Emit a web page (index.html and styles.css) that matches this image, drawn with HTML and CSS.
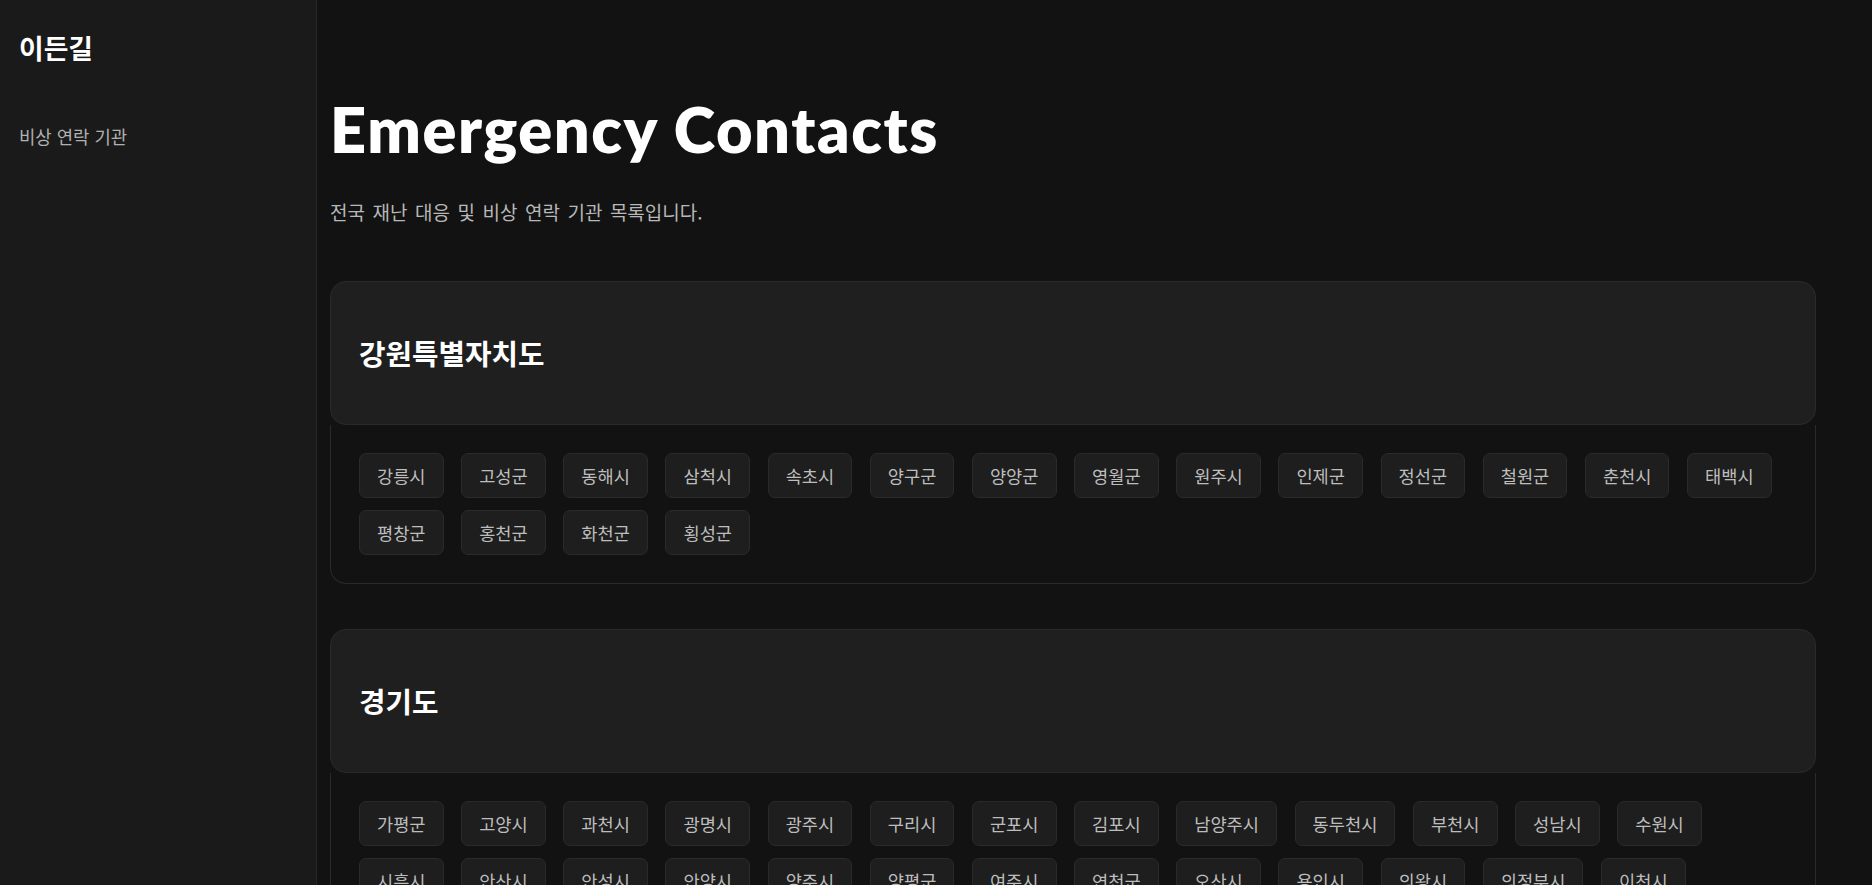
FILE: index.html
```html
<!DOCTYPE html>
<html lang="ko">
<head>
<meta charset="utf-8">
<title>Emergency Contacts</title>
<link rel="stylesheet" href="styles.css">
</head>
<body>
<aside class="sidebar">
  <div class="logo">이든길</div>
  <nav class="nav">
    <a class="nav-item" href="#">비상 연락 기관</a>
  </nav>
</aside>
<main class="main">
  <h1 class="title">Emergency Contacts</h1>
  <p class="subtitle">전국 재난 대응 및 비상 연락 기관 목록입니다.</p>

  <section class="region">
    <div class="region-head"><h2 class="region-name">강원특별자치도</h2></div>
    <div class="region-body">
      <span class="chip">강릉시</span><span class="chip">고성군</span><span class="chip">동해시</span><span class="chip">삼척시</span><span class="chip">속초시</span><span class="chip">양구군</span><span class="chip">양양군</span><span class="chip">영월군</span><span class="chip">원주시</span><span class="chip">인제군</span><span class="chip">정선군</span><span class="chip">철원군</span><span class="chip">춘천시</span><span class="chip">태백시</span><span class="chip">평창군</span><span class="chip">홍천군</span><span class="chip">화천군</span><span class="chip">횡성군</span>
    </div>
  </section>

  <section class="region">
    <div class="region-head"><h2 class="region-name">경기도</h2></div>
    <div class="region-body">
      <span class="chip">가평군</span><span class="chip">고양시</span><span class="chip">과천시</span><span class="chip">광명시</span><span class="chip">광주시</span><span class="chip">구리시</span><span class="chip">군포시</span><span class="chip">김포시</span><span class="chip">남양주시</span><span class="chip">동두천시</span><span class="chip">부천시</span><span class="chip">성남시</span><span class="chip">수원시</span><span class="chip">시흥시</span><span class="chip">안산시</span><span class="chip">안성시</span><span class="chip">안양시</span><span class="chip">양주시</span><span class="chip">양평군</span><span class="chip">여주시</span><span class="chip">연천군</span><span class="chip">오산시</span><span class="chip">용인시</span><span class="chip">의왕시</span><span class="chip">의정부시</span><span class="chip">이천시</span><span class="chip">파주시</span><span class="chip">평택시</span><span class="chip">포천시</span><span class="chip">하남시</span><span class="chip">화성시</span>
    </div>
  </section>

  <section class="region">
    <div class="region-head"><h2 class="region-name">경상남도</h2></div>
    <div class="region-body">
      <span class="chip">거제시</span><span class="chip">거창군</span><span class="chip">고성군</span><span class="chip">김해시</span><span class="chip">남해군</span><span class="chip">밀양시</span><span class="chip">사천시</span><span class="chip">산청군</span><span class="chip">양산시</span><span class="chip">의령군</span><span class="chip">진주시</span><span class="chip">창녕군</span><span class="chip">창원시</span><span class="chip">통영시</span><span class="chip">하동군</span><span class="chip">함안군</span><span class="chip">함양군</span><span class="chip">합천군</span>
    </div>
  </section>
</main>
</body>
</html>
```

FILE: styles.css
```css
* { box-sizing: border-box; }

html, body {
  margin: 0;
  padding: 0;
}

body {
  background: #121212;
  color: #ffffff;
  font-family: "Lato", "Noto Sans CJK KR", "Noto Sans", sans-serif;
  display: flex;
  align-items: flex-start;
}

.sidebar {
  width: 317px;
  flex-shrink: 0;
  height: 100vh;
  position: sticky;
  top: 0;
  background: #1a1a1a;
  border-right: 1px solid #262626;
  padding: 33px 19px 0 19px;
}

.logo {
  font-family: "Noto Sans CJK KR", sans-serif;
  font-size: 26.8px;
  font-weight: 700;
  line-height: 30px;
  color: #ffffff;
}

.nav {
  margin-top: 61px;
}

.nav-item {
  display: block;
  font-family: "Noto Sans CJK KR", sans-serif;
  font-size: 17.8px;
  line-height: 24px;
  color: #b0b0b0;
  text-decoration: none;
}

.main {
  flex: 1;
  min-width: 0;
  padding: 92px 56px 60px 13px;
}

.title {
  margin: 0;
  font-family: "Lato", sans-serif;
  font-size: 63px;
  font-weight: 800;
  letter-spacing: 1.6px;
  line-height: 74px;
  color: #ffffff;
}

.subtitle {
  margin: 33px 0 0 0;
  font-family: "Noto Sans CJK KR", sans-serif;
  font-size: 19px;
  word-spacing: 2.2px;
  line-height: 25px;
  color: #b8b8b8;
}

.region {
  margin-top: 57px;
}

.region + .region {
  margin-top: 45px;
}

.region-head {
  height: 144px;
  display: flex;
  align-items: center;
  padding: 0 28px;
  background: #1f1f1f;
  border: 1px solid #2a2a2a;
  border-radius: 16px;
}

.region-name {
  margin: 0;
  font-family: "Noto Sans CJK KR", sans-serif;
  font-size: 28.8px;
  font-weight: 700;
  line-height: 34px;
  color: #ffffff;
}

.region-body {
  display: flex;
  flex-wrap: wrap;
  gap: 12px 17.6px;
  padding: 28px;
  border: 1px solid #2a2a2a;
  border-top: none;
  border-radius: 0 0 16px 16px;
}

.chip {
  height: 45px;
  display: inline-flex;
  align-items: center;
  padding: 0 17px;
  background: #1e1e1e;
  border: 1px solid #2a2a2a;
  border-radius: 7px;
  font-family: "Noto Sans CJK KR", sans-serif;
  font-size: 17.6px;
  color: #bdbdbd;
}
```
